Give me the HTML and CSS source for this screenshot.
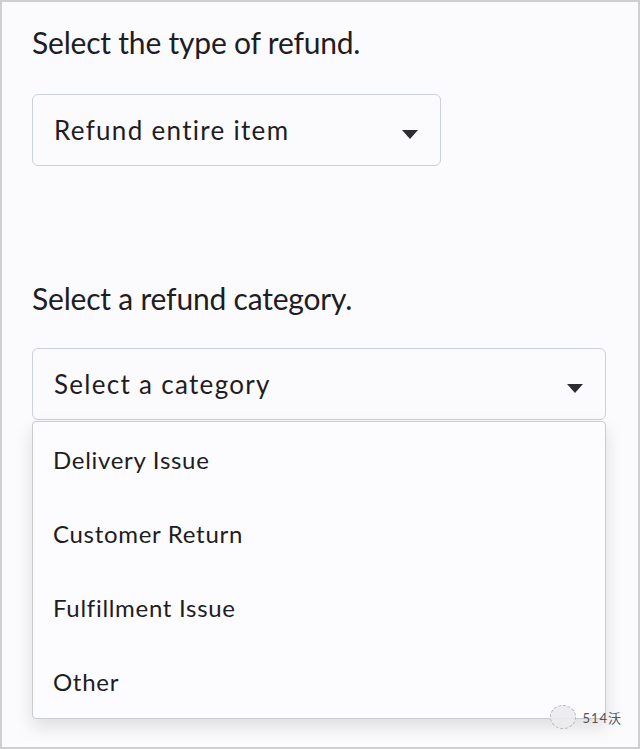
FILE: index.html
```html
<!DOCTYPE html>
<html lang="en">
<head>
    <meta charset="UTF-8">
    <meta name="viewport" content="width=device-width, initial-scale=1.0">
    <title>Refund</title>
    <link rel="stylesheet" href="styles.css">
</head>
<body>
    <div class="frame">
        <div class="field">
            <div class="label">Select the type of refund.</div>
            <div class="select select-short">
                <span>Refund entire item</span>
                <span class="caret"></span>
            </div>
        </div>

        <div class="field field-category">
            <div class="label">Select a refund category.</div>
            <div class="dropdown">
                <div class="select">
                    <span>Select a category</span>
                    <span class="caret"></span>
                </div>
                <ul class="options">
                    <li>Delivery Issue</li>
                    <li>Customer Return</li>
                    <li>Fulfillment Issue</li>
                    <li>Other</li>
                </ul>
            </div>
        </div>

        <div class="mark">
            <span class="mark-logo"></span>
            <span class="mark-text">514沃</span>
        </div>
    </div>
</body>
</html>
```

FILE: styles.css
```css
body {
    margin: 0;
    font-family: 'Lato', 'Noto Sans CJK SC', sans-serif;
    color: #1f1d22;
}

.frame {
    position: relative;
    box-sizing: border-box;
    width: 640px;
    height: 749px;
    background-color: #fbfbfd;
    border: 2px solid #cfcfd1;
    padding: 22px 0 0 30px;
}

.label {
    font-size: 30px;
    line-height: 36px;
    letter-spacing: -0.2px;
}

.field {
    display: flex;
    flex-direction: column;
    gap: 34px;
}

.field-category {
    margin-top: 114px;
}

.field-category .label {
    margin-bottom: -2px;
}

.select {
    box-sizing: border-box;
    height: 72px;
    width: 574px;
    border: 1px solid #ccd0d7;
    border-radius: 6px;
    background-color: #fbfbfd;
    display: flex;
    align-items: center;
    justify-content: space-between;
    padding: 0 22px 0 21px;
    font-size: 26px;
    letter-spacing: 1.3px;
}

.select-short {
    width: 409px;
}

.caret {
    width: 0;
    height: 0;
    border-left: 8px solid transparent;
    border-right: 8px solid transparent;
    border-top: 9px solid #2f2c31;
    margin-top: 8px;
}

.dropdown {
    position: relative;
}

.options {
    position: absolute;
    top: 73px;
    left: 0;
    box-sizing: border-box;
    width: 574px;
    margin: 0;
    padding: 0;
    list-style: none;
    background-color: #fcfcfe;
    border: 1px solid #c9ccd2;
    border-radius: 4px;
    box-shadow: 0 8px 18px rgba(0, 0, 0, 0.12);
}

.options li {
    height: 74px;
    display: flex;
    align-items: center;
    padding-left: 20px;
    font-size: 24px;
    letter-spacing: 0.7px;
}

.mark {
    position: absolute;
    right: 16px;
    bottom: 18px;
    display: flex;
    align-items: center;
    gap: 6px;
}

.mark-logo {
    width: 24px;
    height: 22px;
    border-radius: 50%;
    background-color: rgba(235, 235, 238, 0.9);
    border: 1px dashed #b8b8bc;
}

.mark-text {
    font-size: 13px;
    color: #555;
    letter-spacing: 1px;
}
```
